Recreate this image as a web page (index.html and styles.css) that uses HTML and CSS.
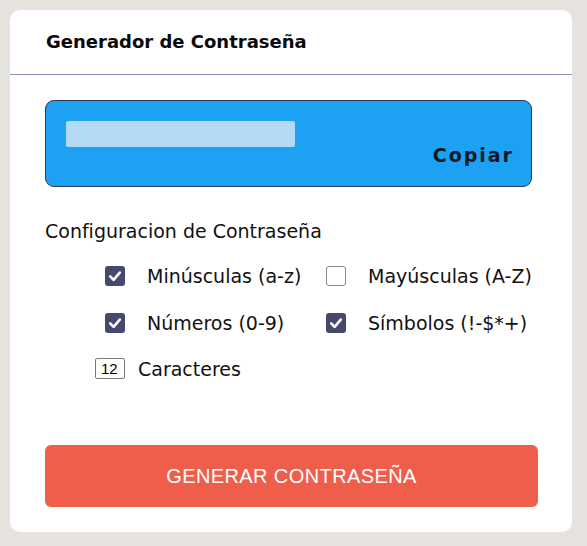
FILE: index.html
```html
<!DOCTYPE html>
<html lang="es">
<head>
<meta charset="utf-8">
<title>Generador de Contraseña</title>
<link rel="stylesheet" href="styles.css">
</head>
<body>
<div class="card">
  <div class="card-header">
    <h1 class="title">Generador de Contraseña</h1>
  </div>
  <div class="card-body">
    <div class="output">
      <input class="output-field" type="text" value="" readonly>
      <span class="copy">Copiar</span>
    </div>
    <p class="section-title">Configuracion de Contraseña</p>
    <div class="options">
      <label class="option"><span class="box checked"><svg viewBox="0 0 20 20" width="20" height="20"><path d="M5.2 10.4 L8.6 13.8 L14.8 6.6" fill="none" stroke="#fff" stroke-width="2.6" stroke-linecap="round" stroke-linejoin="round"/></svg></span><span class="label">Minúsculas (a-z)</span></label>
      <label class="option"><span class="box"></span><span class="label">Mayúsculas (A-Z)</span></label>
      <label class="option"><span class="box checked"><svg viewBox="0 0 20 20" width="20" height="20"><path d="M5.2 10.4 L8.6 13.8 L14.8 6.6" fill="none" stroke="#fff" stroke-width="2.6" stroke-linecap="round" stroke-linejoin="round"/></svg></span><span class="label">Números (0-9)</span></label>
      <label class="option"><span class="box checked"><svg viewBox="0 0 20 20" width="20" height="20"><path d="M5.2 10.4 L8.6 13.8 L14.8 6.6" fill="none" stroke="#fff" stroke-width="2.6" stroke-linecap="round" stroke-linejoin="round"/></svg></span><span class="label">Símbolos (!-$*+)</span></label>
    </div>
    <div class="length">
      <span class="length-input">12</span>
      <span class="label">Caracteres</span>
    </div>
    <button class="generate" type="button">GENERAR CONTRASEÑA</button>
  </div>
</div>
</body>
</html>
```

FILE: styles.css
```css
* { box-sizing: border-box; }

html, body {
  margin: 0;
  padding: 0;
}

body {
  background: #e6e2de;
  padding: 10px 15px 14px 10px;
  font-family: "DejaVu Sans", sans-serif;
  color: #111;
}

.card {
  width: 562px;
  background: #ffffff;
  border-radius: 10px;
  overflow: hidden;
}

.card-header {
  padding: 21px 36px 22px;
  border-bottom: 1px solid #8b8fba;
}

.title {
  margin: 0;
  font-size: 18px;
  font-weight: bold;
  line-height: 21px;
  color: #0a0a0a;
}

.card-body {
  padding: 25px 34px 25px 35px;
  display: flex;
  flex-direction: column;
}

.output {
  width: 487px;
  height: 87px;
  background: #1da1f2;
  border: 1px solid #2a3a48;
  border-radius: 9px;
  padding: 20px 17px 0 20px;
  display: flex;
  flex-direction: column;
}

.output-field {
  width: 229px;
  height: 26px;
  border: none;
  border-radius: 2px;
  background: #b3daf4;
  padding: 0;
  margin: 0;
  outline: none;
}

.copy {
  align-self: flex-end;
  margin-top: -1px;
  font-size: 19px;
  line-height: 19px;
  font-weight: bold;
  letter-spacing: 2px;
  color: #0c1a24;
}

.section-title {
  margin: 33px 0 0;
  font-size: 19px;
  line-height: 22px;
  color: #111;
}

.options {
  margin-top: 19px;
  padding-left: 60px;
  display: grid;
  grid-template-columns: 221px auto;
  row-gap: 17px;
}

.option {
  display: flex;
  align-items: center;
  height: 30px;
}

.box {
  width: 20px;
  height: 20px;
  border-radius: 3px;
  border: 1px solid #8a8a8a;
  background: #fff;
  flex: none;
  margin-right: 22px;
  display: flex;
}

.box.checked {
  border: none;
  background: #46486d;
}

.label {
  font-size: 19px;
  line-height: 22px;
  color: #111;
}

.length {
  margin-top: 20px;
  padding-left: 50px;
  display: flex;
  align-items: center;
  height: 21px;
}

.length-input {
  width: 30px;
  height: 21px;
  border: 1px solid #7a7a7a;
  border-radius: 2px;
  font-family: "Liberation Sans", Arial, sans-serif;
  font-size: 15px;
  line-height: 19px;
  padding-left: 5px;
  margin-right: 13px;
  color: #000;
}

.generate {
  margin-top: 66px;
  width: 493px;
  height: 62px;
  border: none;
  border-radius: 6px;
  background: #ef5e4b;
  color: #fff;
  font-family: "Liberation Sans", Arial, sans-serif;
  font-size: 20px;
  letter-spacing: 0.4px;
  padding: 0;
}
```
